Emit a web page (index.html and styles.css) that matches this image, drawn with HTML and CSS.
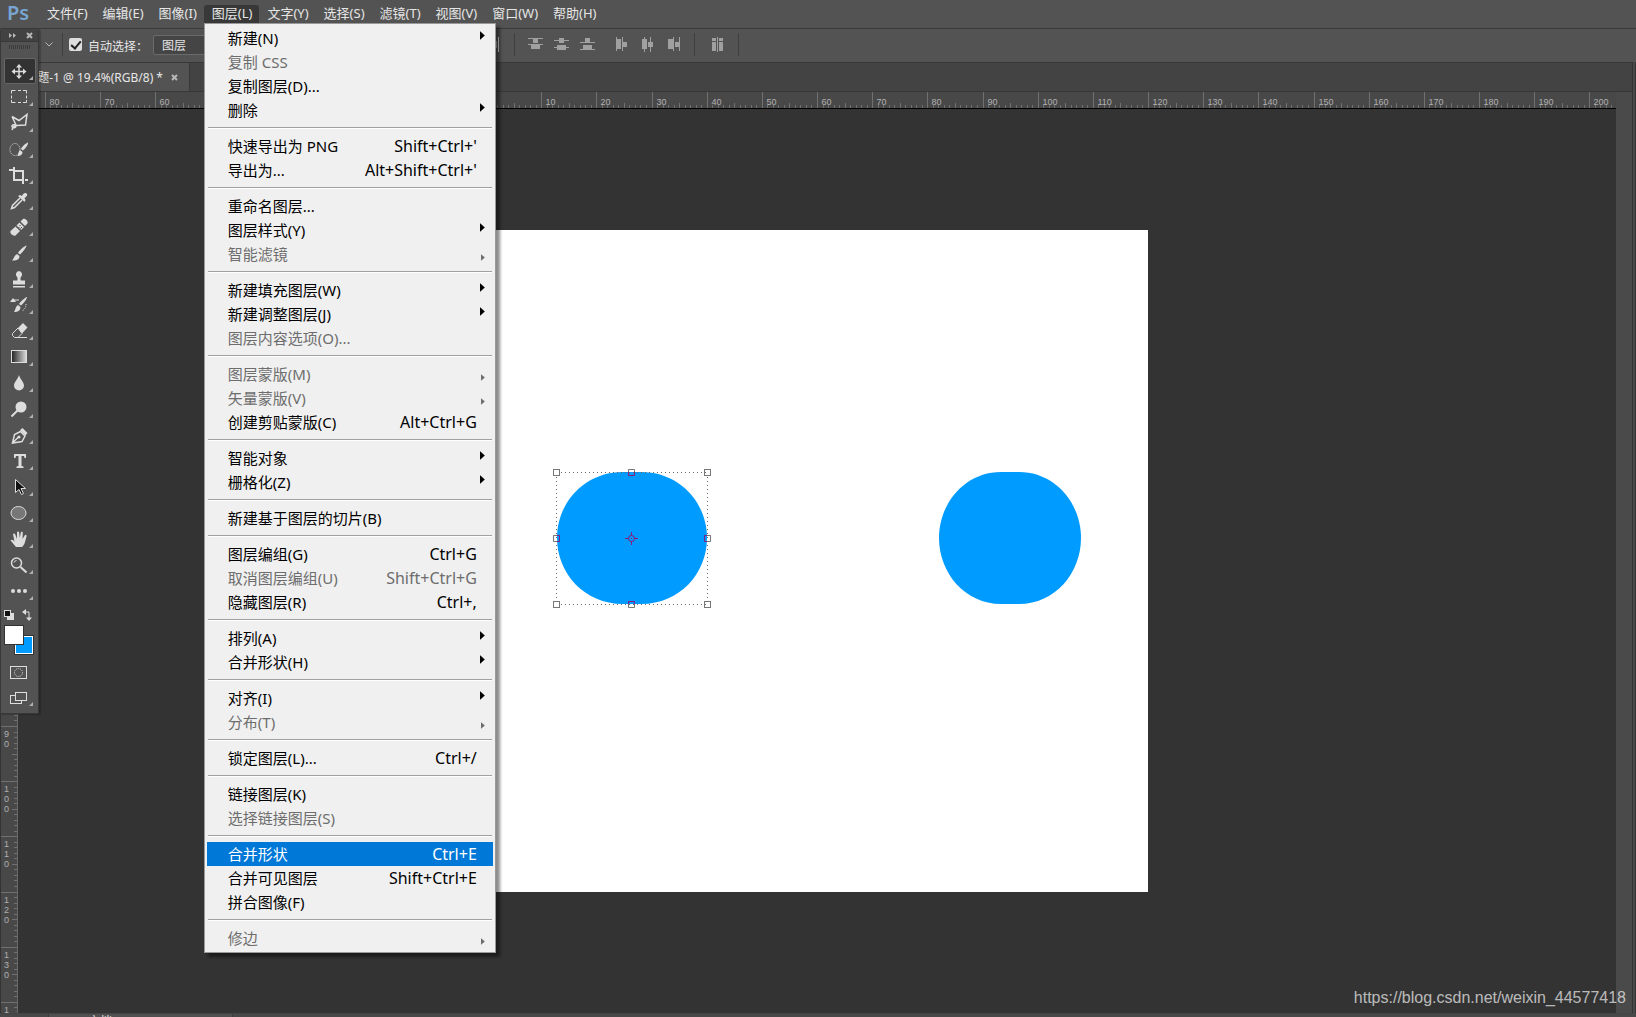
FILE: index.html
```html
<!DOCTYPE html>
<html lang="zh-CN">
<head>
    <meta charset="UTF-8">
    <meta name="viewport" content="width=device-width, initial-scale=1.0">
    <title>Photoshop</title>
    <link rel="stylesheet" href="styles.css">
</head>
<body>
    <nav class="menubar">
        <span class="logo">Ps</span>
        <ul class="menus">
            <li><button>文件(F)</button></li>
            <li><button>编辑(E)</button></li>
            <li><button>图像(I)</button></li>
            <li class="open">
                <button>图层(L)</button>
                <div class="dropdown">
                    <button class="item sub">新建(N)</button>
                    <button class="item" disabled>复制 CSS</button>
                    <button class="item">复制图层(D)...</button>
                    <button class="item sub">删除</button>
                    <hr>
                    <button class="item">快速导出为 PNG<kbd>Shift+Ctrl+'</kbd></button>
                    <button class="item">导出为...<kbd>Alt+Shift+Ctrl+'</kbd></button>
                    <hr>
                    <button class="item">重命名图层...</button>
                    <button class="item sub">图层样式(Y)</button>
                    <button class="item sub" disabled>智能滤镜</button>
                    <hr>
                    <button class="item sub">新建填充图层(W)</button>
                    <button class="item sub">新建调整图层(J)</button>
                    <button class="item" disabled>图层内容选项(O)...</button>
                    <hr>
                    <button class="item sub" disabled>图层蒙版(M)</button>
                    <button class="item sub" disabled>矢量蒙版(V)</button>
                    <button class="item">创建剪贴蒙版(C)<kbd>Alt+Ctrl+G</kbd></button>
                    <hr>
                    <button class="item sub">智能对象</button>
                    <button class="item sub">栅格化(Z)</button>
                    <hr>
                    <button class="item">新建基于图层的切片(B)</button>
                    <hr>
                    <button class="item">图层编组(G)<kbd>Ctrl+G</kbd></button>
                    <button class="item" disabled>取消图层编组(U)<kbd>Shift+Ctrl+G</kbd></button>
                    <button class="item">隐藏图层(R)<kbd>Ctrl+,</kbd></button>
                    <hr>
                    <button class="item sub">排列(A)</button>
                    <button class="item sub">合并形状(H)</button>
                    <hr>
                    <button class="item sub">对齐(I)</button>
                    <button class="item sub" disabled>分布(T)</button>
                    <hr>
                    <button class="item">锁定图层(L)...<kbd>Ctrl+/</kbd></button>
                    <hr>
                    <button class="item">链接图层(K)</button>
                    <button class="item" disabled>选择链接图层(S)</button>
                    <hr>
                    <button class="item current">合并形状<kbd>Ctrl+E</kbd></button>
                    <button class="item">合并可见图层<kbd>Shift+Ctrl+E</kbd></button>
                    <button class="item">拼合图像(F)</button>
                    <hr>
                    <button class="item sub" disabled>修边</button>
                </div>
            </li>
            <li><button>文字(Y)</button></li>
            <li><button>选择(S)</button></li>
            <li><button>滤镜(T)</button></li>
            <li><button>视图(V)</button></li>
            <li><button>窗口(W)</button></li>
            <li><button>帮助(H)</button></li>
        </ul>
    </nav>

    <div class="options">
        <div class="options-left">
            <svg class="chevron" viewBox="0 0 8 5"><path d="M.5 .5L4 4L7.5 .5"/></svg>
            <span class="divider"></span>
            <input type="checkbox" id="auto" checked>
            <label for="auto">自动选择：</label>
            <select id="target" aria-label="图层">
                <option>图层</option>
                <option>组</option>
            </select>
        </div>
        <div class="align">
            <button aria-label="右对齐"><svg viewBox="0 0 15 15"><path d="M10 4h3v7h-3z"/><path class="lit" d="M14 0h1v15h-1z"/></svg></button>
            <span class="divider"></span>
            <div class="align-group">
                <button aria-label="按顶分布"><svg viewBox="0 0 15 15"><path d="M0 1h15v1H0zM5 2h5v4H5zM0 7h15v1H0zM3 8h9v4H3z"/></svg></button>
                <button aria-label="垂直居中分布"><svg viewBox="0 0 15 15"><path d="M0 3h15v1H0zM5 1h5v5H5zM0 10h15v1H0zM3 8h9v5H3z"/></svg></button>
                <button aria-label="按底分布"><svg viewBox="0 0 15 15"><path d="M0 5h15v1H0zM5 1h5v4H5zM0 12h15v1H0zM3 8h9v4H3z"/></svg></button>
            </div>
            <div class="align-group">
                <button aria-label="按左分布"><svg viewBox="0 0 15 15"><path d="M1 0h1v14H1zM2 2h4v10H2zM7 0h1v14H7zM8 5h4v5H8z"/></svg></button>
                <button aria-label="水平居中分布"><svg viewBox="0 0 15 15"><path d="M3 0h1v15H3zM1 2h5v10H1zM9 0h1v15H9zM7 5h5v5H7z"/></svg></button>
                <button aria-label="按右分布"><svg viewBox="0 0 15 15"><path d="M6 0h1v14H6zM1 2h5v10H1zM12 0h1v14h-1zM8 5h4v5H8z"/></svg></button>
            </div>
            <span class="divider"></span>
            <button class="auto-align" aria-label="自动对齐图层"><svg viewBox="0 0 15 15"><path d="M2 1h4v3H2zM2 5h4v9H2zM7 0h1v15H7zM9 1h4v3H9zM9 5h4v9H9z"/></svg></button>
            <span class="divider"></span>
        </div>
    </div>

    <main class="work">
        <section class="document">
            <div class="tabs">
                <div class="tab">未标题-1 @ 19.4%(RGB/8) *
                    <button aria-label="关闭"><svg viewBox="0 0 7 7"><path d="M1 1l5 5M6 1l-5 5"/></svg></button>
                </div>
            </div>
            <div class="view">
                <svg class="ruler-top" id="rulerTop"></svg>
                <svg class="ruler-left" id="rulerLeft"></svg>
                <div class="pasteboard">
                    <svg class="canvas" viewBox="0 0 662 662">
                        <rect width="662" height="662" fill="#fff"/>
                        <path fill="#009bff" d="M71 308C71 273 98 242 137 242h18C194 242 221 273 221 308C221 343 194 374 155 374h-18C98 374 71 343 71 308z"/>
                        <path fill="#009bff" d="M453 308C453 273 479 242 515 242h18C569 242 595 273 595 308C595 343 569 374 533 374h-18C479 374 453 343 453 308z"/>
                        <path class="bounds" d="M75 242.5H221M75 374.5H221M70.5 247V374M221.5 247V374"/>
                        <g class="handle">
                            <rect x="67.5" y="239.5" width="6" height="6"/>
                            <rect x="218.5" y="239.5" width="6" height="6"/>
                            <rect x="67.5" y="371.5" width="6" height="6"/>
                            <rect x="218.5" y="371.5" width="6" height="6"/>
                            <path d="M142.500 242v-2.500h6v2.500M142.500 374v3.500h6v-3.500M71 305.500h-3.500v6h3.500M221 305.500h3.500v6h-3.500"/>
                        </g>
                        <path class="handle over" d="M142.500 242v3.500h6v-3.500M142.500 374v-2.500h6v2.500M71 305.500h2.500v6h-2.500M221 305.500h-2.500v6h2.500"/>
                        <path class="handle over" d="M145.500 302v4M145.500 311v4M139 308.500h4M148 308.500h4M145 308.500h1"/>
                        <circle class="handle over" cx="145.5" cy="308.5" r="3"/>
                    </svg>
                </div>
                <div class="scroll"></div>
            </div>
        </section>
        <aside class="dock"></aside>
    </main>

    <footer class="status">
        <div class="doc-info">文档</div>
    </footer>

    <div class="toolbox">
        <div class="toolbox-head">
            <svg viewBox="0 0 8 5"><path d="M0 0l3 2.500l-3 2.500zM4 0l3 2.500l-3 2.500z"/></svg>
            <svg class="cross" viewBox="0 0 7 7"><path d="M1 1l5 5M6 1l-5 5"/></svg>
        </div>
        <div class="grip"></div>
        <button class="tool active" aria-label="移动"><svg viewBox="0 0 36 26"><path class="line" d="M18 8v11M12.500 13.500h11"/><path d="M18 6l3 3.500h-6zM18 21l3-3.500h-6zM10.500 13.500l3.500-3v6zM25.500 13.500l-3.500-3v6z"/></svg></button>
        <button class="tool" aria-label="矩形选框"><svg viewBox="0 0 36 26"><path class="thin" d="M10.500 9.500v-3h4M17 6.500h3M22 6.500h3.500v3M25.500 11.500v3M25.500 16v2.500h-3.500M20 18.500h-3M14.500 18.500h-4v-2.500M10.500 14.500v-3"/></svg></button>
        <button class="tool" aria-label="多边形套索"><svg viewBox="0 0 36 26"><path class="line" d="M11 6.500l7 4l8-6l-1.500 10.500l-9 .5l-3.500 1.500M11 6.500l4 8.500M14 15c-3-1-4 2-2 2.500s4-.5 2-2.500M12 17.500l-1 2.500"/></svg></button>
        <button class="tool" aria-label="快速选择"><svg viewBox="0 0 36 26"><ellipse class="dots" cx="14" cy="13.5" rx="5" ry="6"/><path d="M27 6.500c.5 2-3 6.500-5 8l-2-1.500c1-2.500 5-6 7-6.500zM19 14l2.500 2c0 3-2.500 4-5 4c1-1.500 .5-4 2.500-6z"/></svg></button>
        <button class="tool" aria-label="裁剪"><svg viewBox="0 0 36 26"><path class="thick" d="M8 8h4M13 5v13h9M14 9h8v13M24 18h3"/></svg></button>
        <button class="tool" aria-label="吸管"><svg viewBox="0 0 36 26"><path class="line" d="M19 10l-7.500 7.500l-1 3l3-1l7.500-7.500"/><path d="M17 8l2-1l2 1c1-2.500 3-3.500 4.500-2.500s.5 3-2 4.500l1 2l-1 2z"/></svg></button>
        <button class="tool" aria-label="修复画笔"><svg viewBox="0 0 36 26"><path d="M9.500 17l5-4.500l4.500 4.500l-4.500 4.500c-2 1-6-2-5-4.500zM15.500 11.500l3-3l4.500 4.500l-3 3zM19.500 7.500l2.500-2.500c2-1 5.500 2 4.500 4.500l-2.500 2.500z"/><path class="cut" d="M18.500 11.500h1M17.500 13.500h1M20 13.500h1M19 15h1"/></svg></button>
        <button class="tool" aria-label="画笔"><svg viewBox="0 0 36 26"><path d="M25.500 5.500c0 2-4.500 7.500-6.500 9l-2-1.500c1.500-3 6.500-7 8.500-7.500zM16 14l2.500 2c0 4-4 5-7.500 4.500c2-1.500 2-5 5-6.500z"/></svg></button>
        <button class="tool" aria-label="仿制图章"><svg viewBox="0 0 36 26"><path d="M18 5a3.500 3.500 0 0 1 2 6c-1 1-.5 3 0 3.500h4v4h-12v-4h4c.5-.5 1-2.500 0-3.500a3.500 3.500 0 0 1 2-6zM12 20h12v1.500h-12z"/></svg></button>
        <button class="tool" aria-label="历史记录画笔"><svg viewBox="0 0 36 26"><path d="M26 5c0 2-4 7-6 8.500l-2-1.500c1-2 6-6.500 8-7zM17 13l2.500 2c0 4-3 5-6.500 5c1.500-1.500 1-5 4-7zM9 10l3-4l3 4z"/><path class="thin" d="M12 8h6"/><path class="dots" d="M25 12c0 4-2 6-4 7"/></svg></button>
        <button class="tool" aria-label="橡皮擦"><svg viewBox="0 0 36 26"><path d="M17 10l5-5l4.500 4.500l-5.500 6z"/><path class="thin" d="M17 10l-5.500 5.500v2l2 2h3.500l4-4zM16 19.500h10"/></svg></button>
        <button class="tool" aria-label="渐变"><svg viewBox="0 0 36 26">
            <defs><linearGradient id="grad"><stop offset="0" stop-color="#222"/><stop offset="1" stop-color="#ddd"/></linearGradient></defs>
            <rect x="10.5" y="6.5" width="15" height="12" fill="url(#grad)" stroke="#ddd"/></svg></button>
        <button class="tool" aria-label="模糊"><svg viewBox="0 0 36 26"><path d="M18 5c1 4 5 7 5 10.500a5 5 0 0 1-10 0c0-3.500 4-6.500 5-10.500z"/></svg></button>
        <button class="tool" aria-label="减淡"><svg viewBox="0 0 36 26"><circle cx="20" cy="11" r="5.5"/><path class="thick" d="M16.500 14.500l-6 6"/></svg></button>
        <button class="tool" aria-label="钢笔"><svg viewBox="0 0 36 26"><path class="line" d="M11.500 21l2-8.500l6-3l4.500 4.500l-3 5.500zM12 20.500l5.500-5.500"/><circle cx="18" cy="15" r="1.5"/><path d="M19 8l2.500-2l5 5l-2 2.500z"/></svg></button>
        <button class="tool" aria-label="文字"><svg viewBox="0 0 36 26"><path d="M13 6h12v4h-1.500l-.5-2h-2.500v10l2 .5v1.500h-7v-1.500l2-.5v-10h-2.500l-.5 2h-1.500z"/></svg></button>
        <button class="tool" aria-label="路径选择"><svg viewBox="0 0 36 26"><path d="M14.500 5.500v13l3.500-3l2.500 5l2-1l-2.500-5h4.500z" fill="#111" stroke="#ddd"/></svg></button>
        <button class="tool" aria-label="椭圆"><svg viewBox="0 0 36 26"><ellipse cx="17.5" cy="13" rx="7.5" ry="6.5" fill="#777" stroke="#ddd"/></svg></button>
        <button class="tool" aria-label="抓手"><svg viewBox="0 0 36 26"><path d="M15 21c-2-2-4-5-5.500-6.500c1-1.500 3-.5 4 1.500L12 8c1-1 2-.5 2.500 1l1.500 4V6c1-1 2-.5 2.200 .5L18.700 12L20 6c1-.7 2 0 1.800 1L21.500 13L24 9c1-.5 2 .5 1.500 1.500L24 16c-.5 2.500-2 4-3 5z"/></svg></button>
        <button class="tool" aria-label="缩放"><svg viewBox="0 0 36 26"><circle class="line" cx="15.5" cy="11" r="5"/><path class="thin" d="M13 10.500a3 3 0 0 1 2.500-2"/><path class="thick" d="M19.500 15l6 5.500"/></svg></button>
        <button class="tool" aria-label="编辑工具栏"><svg viewBox="0 0 36 26"><circle cx="12" cy="13" r="2"/><circle cx="18" cy="13" r="2"/><circle cx="24" cy="13" r="2"/></svg></button>
        <svg class="swatches" viewBox="0 0 36 54">
            <rect x="6" y="9" width="7" height="7" fill="#ddd"/>
            <rect x="3.5" y="6.5" width="6" height="6" fill="#111" stroke="#ddd"/>
            <path d="M23 8h5v6" fill="none" stroke="#ddd"/>
            <path d="M21 8l4-3v6zM28 17l-3-3.500h6z" fill="#ddd"/>
            <rect x="13.5" y="31.5" width="19" height="19" fill="#fff" stroke="#333"/>
            <rect x="15" y="33" width="16" height="16" fill="#009bff"/>
            <rect x="3.5" y="21.5" width="19" height="19" fill="#fff" stroke="#333"/>
        </svg>
        <button class="tool plain" aria-label="快速蒙版"><svg viewBox="0 0 36 26"><rect class="thin" x="9.5" y="8.5" width="16" height="12"/><circle class="dots" cx="17.5" cy="14.5" r="4"/></svg></button>
        <button class="tool" aria-label="屏幕模式"><svg viewBox="0 0 36 26"><rect class="thin" x="9.5" y="11.5" width="11" height="8"/><rect x="14.5" y="8.5" width="11" height="8" fill="#535353" stroke="#ddd"/></svg></button>
    </div>

    <div class="watermark">https://blog.csdn.net/weixin_44577418</div>

    <script src="rulers.js"></script>
</body>
</html>
```
FILE: styles.css
```css
* {
    box-sizing: border-box;
}
body {
    margin: 0;
    height: 100vh;
    overflow: hidden;
    display: flex;
    flex-direction: column;
    background: #535353;
    color: #e6e6e6;
    font: 12px "Noto Sans", "Noto Sans CJK SC", sans-serif;
}
button {
    font: inherit;
    color: inherit;
    border: 0;
    padding: 0;
    background: none;
}

/* menu bar */
.menubar {
    flex: none;
    display: flex;
    height: 28px;
    padding-top: 5px;
}
.logo {
    width: 39px;
    padding-left: 7px;
    font: 600 20px/16px "Noto Sans", sans-serif;
    color: #78a5d2;
}
.menus {
    display: flex;
    margin: 0;
    padding: 0;
    list-style: none;
}
.menus li {
    position: relative;
    height: 18px;
}
.menus li > button {
    display: block;
    height: 18px;
    padding: 0 7px 2px 8px;
    line-height: 16px;
    font-size: 13px;
    white-space: nowrap;
}
.open > button {
    background: #383838;
    border-radius: 3px 3px 0 0;
}
.dropdown {
    position: absolute;
    z-index: 10;
    top: 100%;
    left: 0;
    width: 292px;
    padding: 2px;
    background: #f0f0f0;
    border: 1px solid #999;
    box-shadow: 4px 4px 3px rgba(0, 0, 0, .45);
    color: #000;
}
.dropdown hr {
    height: 2px;
    margin: 5px 1px;
    border: 0;
    border-top: 1px solid #a0a0a0;
    background: #fff;
}
.item {
    display: flex;
    justify-content: space-between;
    width: 100%;
    height: 24px;
    padding: 0 16px 0 21px;
    font-size: 15px;
    line-height: 24px;
    white-space: nowrap;
}
.item kbd {
    font: inherit;
    font-size: 16px;
}
.item:disabled {
    color: #6d6d6d;
}
.item.current {
    background: #0078d7;
    color: #fff;
}
.item.sub {
    padding-right: 8px;
}
.item.sub::after {
    content: "";
    margin-top: 5px;
    width: 5px;
    height: 9px;
    background: #000;
    clip-path: polygon(0 0, 100% 50%, 0 100%);
}
.item.sub:disabled::after {
    margin-top: 12px;
    width: 4px;
    height: 7px;
    background: #6d6d6d;
}

/* options bar */
.options {
    flex: none;
    display: flex;
    height: 34px;
    border-top: 1px solid #3a3a3a;
}
.options-left {
    display: flex;
    align-items: center;
    width: 497px;
    padding-left: 45px;
    padding-bottom: 2px;
}
.chevron {
    width: 8px;
    height: 5px;
    margin-right: 9px;
    fill: none;
    stroke: #b8b8b8;
}
.divider {
    width: 1px;
    height: 23px;
    background: #3f3f3f;
}
#auto {
    appearance: none;
    width: 13px;
    height: 13px;
    margin: 0 6px;
    border-radius: 2px;
    background: #ddd;
}
#auto::after {
    content: "";
    display: block;
    width: 4px;
    height: 8px;
    margin: 1px 0 0 4px;
    border: solid #222;
    border-width: 0 2px 2px 0;
    transform: rotate(40deg);
}
.options label {
    width: 65px;
    padding-top: 2px;
}
select {
    appearance: none;
    width: 64px;
    height: 20px;
    padding: 1px 8px 0;
    border: 1px solid #6a6a6a;
    border-radius: 2px;
    background: #454545;
    color: inherit;
    font: inherit;
}
.align {
    display: flex;
    align-items: center;
    padding-bottom: 2px;
}
.align > button:first-child {
    width: 17px;
    margin-left: -13px;
    margin-right: 13px;
}
.align svg {
    display: block;
    width: 15px;
    height: 15px;
    fill: #a0a0a0;
}
.align .lit {
    fill: #ddd;
}
.align-group {
    display: flex;
    gap: 11px;
    padding-left: 13px;
}
.align-group + .align-group {
    padding: 0 12px 0 20px;
}
.auto-align {
    margin: 0 13px 0 15px;
}

/* document window */
.work {
    flex: 1;
    display: flex;
    min-height: 0;
}
.document {
    flex: 1;
    display: flex;
    flex-direction: column;
    min-width: 0;
    border-top: 1px solid #383838;
}
.tabs {
    display: flex;
    height: 28px;
    background: #434343;
}
.tab {
    display: flex;
    align-items: center;
    width: 190px;
    justify-content: flex-end;
    gap: 8px;
    padding-right: 11px;
    background: #535353;
    border-right: 1px solid #383838;
    white-space: nowrap;
}
.tab svg,
.cross {
    display: block;
    width: 7px;
    height: 7px;
    fill: none;
    stroke: #b8b8b8;
    stroke-width: 2;
}
.view {
    flex: 1;
    display: grid;
    grid-template: 17px 1fr / 18px 1fr 16px;
    min-height: 0;
    border-top: 1px solid #383838;
    background: #484848;
}
.ruler-top {
    grid-column: 1 / 3;
    width: 100%;
    height: 17px;
    border-bottom: 1px solid #000;
}
.ruler-left {
    grid-row: 2;
    width: 18px;
    height: 100%;
    border-left: 1px solid #333;
    border-right: 1px solid #6a6a6a;
}
.ruler-top line,
.ruler-left line {
    stroke: #707070;
}
.ruler-top text,
.ruler-left text {
    font: 9px "Liberation Sans", Arial, sans-serif;
    fill: #b0b0b0;
}
.pasteboard {
    position: relative;
    overflow: hidden;
    background: #333;
}
.canvas {
    position: absolute;
    left: 468px;
    top: 121px;
    width: 662px;
    height: 662px;
}
.bounds {
    fill: none;
    stroke: #666;
    stroke-dasharray: 1 3;
}
.handle {
    fill: none;
    stroke: #777;
}
.over {
    stroke: #8a1a7a;
}
.scroll {
    grid-row: 1 / 3;
    grid-column: 3;
    background: #4a4a4a;
}
.dock {
    width: 4px;
    background: #4a4a4a;
    border: solid #333;
    border-width: 0 1px;
}
.status {
    flex: none;
    height: 4px;
    overflow: hidden;
    border-top: 1px solid #444;
    background: #484848;
}
.doc-info {
    width: 185px;
    margin-left: 48px;
    padding-left: 39px;
    line-height: 16px;
    background: #505050;
    border: solid #3c3c3c;
    border-width: 0 1px;
}

/* floating tool palette */
.toolbox {
    position: absolute;
    z-index: 5;
    top: 28px;
    left: 0;
    width: 39px;
    padding-bottom: 3px;
    background: #535353;
    border: 1px solid #383838;
    border-radius: 3px 3px 0 0;
    box-shadow: 2px 1px 1px rgba(0, 0, 0, .2);
}
.toolbox-head {
    display: flex;
    align-items: center;
    justify-content: space-between;
    height: 13px;
    padding: 0 5px 0 8px;
    background: #424242;
    border-bottom: 1px solid #383838;
}
.toolbox-head svg {
    width: 8px;
    height: 5px;
    fill: #b8b8b8;
}
.toolbox-head .cross {
    width: 7px;
    height: 7px;
}
.grip {
    height: 4px;
    margin: 3px 8px 9px;
    background: repeating-linear-gradient(90deg, #3c3c3c 0 1px, transparent 1px 2px);
}
.tool {
    display: block;
    position: relative;
    width: 36px;
    height: 26px;
}
.tool svg {
    display: block;
    width: 36px;
    height: 26px;
    fill: #ddd;
}
.tool::after {
    content: "";
    position: absolute;
    left: 28px;
    bottom: 4px;
    width: 4px;
    height: 4px;
    background: #b0b0b0;
    clip-path: polygon(100% 0, 100% 100%, 0 100%);
}
.tool.plain::after {
    display: none;
}
.tool.active {
    width: 32px;
    margin-left: 3px;
    border: 1px solid #666;
    border-radius: 2px;
    background: #333;
}
.tool.active svg {
    margin: -1px 0 0 -4px;
}
.tool.active::after {
    left: 24px;
    bottom: 3px;
}
.tool .thin,
.tool .line,
.tool .thick,
.tool .dots {
    fill: none;
    stroke: #ddd;
}
.tool .line {
    stroke-width: 1.5;
}
.tool .thick {
    stroke-width: 2;
}
.tool .dots {
    stroke-dasharray: 1 1;
}
.tool .cut {
    stroke: #444;
}
.swatches {
    display: block;
    width: 36px;
    height: 54px;
}

.watermark {
    position: absolute;
    right: 10px;
    bottom: 10px;
    font: 16px/18px "Liberation Sans", Arial, sans-serif;
    color: rgba(255, 255, 255, .68);
}
```
FILE: rulers.js
```js
// view scale: one document unit on screen, and where the canvas starts
const unit = 662 / 120;
const originX = 486;
const originY = 121;
const svgNS = 'http://www.w3.org/2000/svg';

function add(svg, name, attrs, text) {
    const el = document.createElementNS(svgNS, name);
    for (const key in attrs) el.setAttribute(key, attrs[key]);
    if (text !== undefined) el.textContent = text;
    svg.appendChild(el);
}

function tickLength(n) {
    if (n % 10 === 0) return 16;
    return n % 5 === 0 ? 5 : 3;
}

function drawTop() {
    const svg = document.getElementById('rulerTop');
    for (let n = -80; originX + n * unit < svg.clientWidth; n++) {
        const x = Math.round(originX + n * unit) + 0.5;
        add(svg, 'line', { x1: x, x2: x, y1: 16 - tickLength(n), y2: 16 });
        if (n % 10 === 0) add(svg, 'text', { x: x + 4, y: 13 }, Math.abs(n));
    }
}

function drawLeft() {
    const svg = document.getElementById('rulerLeft');
    // the palette covers everything above 86
    for (let n = 86; originY + n * unit < svg.clientHeight; n++) {
        const y = Math.floor(originY + n * unit) + 0.5;
        add(svg, 'line', { x1: 16 - tickLength(n), x2: 16, y1: y, y2: y });
        if (n % 10 === 0) {
            // labels read downwards, one digit per line
            String(n).split('').forEach((digit, i) => {
                const base = y + 10 + i * 10;
                if (base < svg.clientHeight) add(svg, 'text', { x: 3, y: base }, digit);
            });
        }
    }
}

drawTop();
drawLeft();
```
